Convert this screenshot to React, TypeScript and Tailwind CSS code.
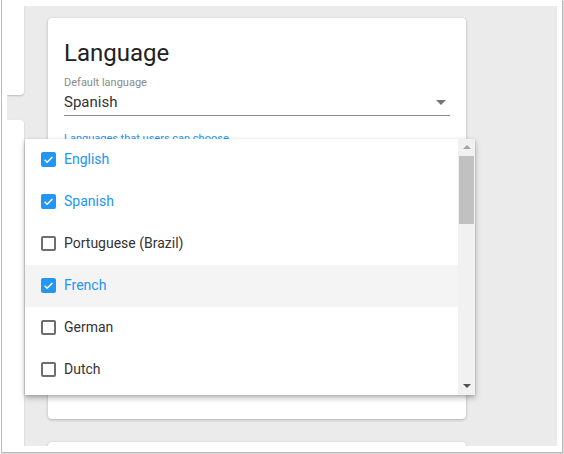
import React from "react";

const languages = [
  { name: "English", checked: true },
  { name: "Spanish", checked: true },
  { name: "Portuguese (Brazil)", checked: false },
  { name: "French", checked: true, active: true },
  { name: "German", checked: false },
  { name: "Dutch", checked: false },
];

const Check = ({ checked }: { checked: boolean }) =>
  checked ? (
    <span className="flex h-[15px] w-[15px] items-center justify-center rounded-[2px] bg-[#2196f3]">
      <svg width="11" height="11" viewBox="0 0 24 24">
        <path d="M3.5 12.5l5.5 5.5L20.5 6.5" fill="none" stroke="white" strokeWidth="3.4" />
      </svg>
    </span>
  ) : (
    <span className="h-[15px] w-[15px] rounded-[2px] border-2 border-[#6e6e6e]" />
  );

const App = () => {
  return (
    <div className="h-[454px] w-[564px] bg-white font-['Roboto',sans-serif]">
      <div className="relative ml-[1px] h-[453px] w-[562px] border-x border-b border-[#b9b9b9] pb-[5px] pl-[5px] pr-[4px] pt-[6px] shadow-[1px_1px_1px_rgba(0,0,0,0.15)]">
        <div className="flex h-[440px] w-[550px] overflow-hidden bg-[#ebebeb]">
          {/* left column (cut off) */}
          <div className="flex w-[17px] shrink-0 flex-col gap-[25px]">
            <div className="h-[89px] shrink-0 rounded-br-[4px] bg-white shadow-[0_1px_2px_rgba(0,0,0,0.2)]" />
            <div className="h-[340px] shrink-0 rounded-tr-[4px] bg-white shadow-[0_1px_2px_rgba(0,0,0,0.2)]" />
          </div>

          {/* main column */}
          <div className="ml-[24px] flex w-[418px] shrink-0 flex-col gap-[23px] pt-[12px]">
            <div className="h-[401px] shrink-0 rounded-[4px] bg-white px-4 pt-[23px] shadow-[0_1px_3px_rgba(0,0,0,0.25)]">
              <h2 className="text-[24px] leading-[24px] text-[#212121]">Language</h2>
              <div className="mt-[12px] text-[11px] leading-[11px] text-[#8a8a8a]">Default language</div>
              <div className="mt-[7px] flex items-center justify-between border-b border-[#8c8c8c] pb-[5px]">
                <span className="text-[15px] leading-[15px] text-[#333]">Spanish</span>
                <svg width="10" height="5" viewBox="0 0 10 5" className="mr-[4px]">
                  <path d="M0 0h10L5 5z" fill="#757575" />
                </svg>
              </div>
              <div className="mt-[17px] text-[11px] leading-[11px] text-[#2196f3]">
                Languages that users can choose
              </div>
            </div>
            <div className="h-[20px] shrink-0 rounded-t-[4px] bg-white shadow-[0_1px_3px_rgba(0,0,0,0.25)]" />
          </div>
        </div>

        {/* dropdown menu */}
        <div className="absolute left-[23px] top-[139px] flex h-[256px] w-[450px] bg-white shadow-[0_3px_6px_rgba(0,0,0,0.25),0_1px_3px_rgba(0,0,0,0.15)]">
          <ul className="flex-1">
            {languages.map((l) => (
              <li
                key={l.name}
                className={`flex h-[42px] items-center gap-[8px] pb-[1px] pl-4 text-[14px] ${
                  l.active ? "bg-[#f4f4f4]" : ""
                } ${l.checked ? "text-[#2196f3]" : "text-[#333]"}`}
              >
                <Check checked={l.checked} />
                <span>{l.name}</span>
              </li>
            ))}
          </ul>
          <div className="flex w-[17px] flex-col items-center bg-[#f1f1f1]">
            <svg width="8" height="4" viewBox="0 0 8 4" className="mt-[6px]">
              <path d="M0 4h8L4 0z" fill="#a3a3a3" />
            </svg>
            <div className="mt-[7px] h-[68px] w-[15px] bg-[#c1c1c1]" />
            <svg width="8" height="4" viewBox="0 0 8 4" className="mt-auto mb-[7px]">
              <path d="M0 0h8L4 4z" fill="#505050" />
            </svg>
          </div>
        </div>
      </div>
    </div>
  );
};

export default App;
